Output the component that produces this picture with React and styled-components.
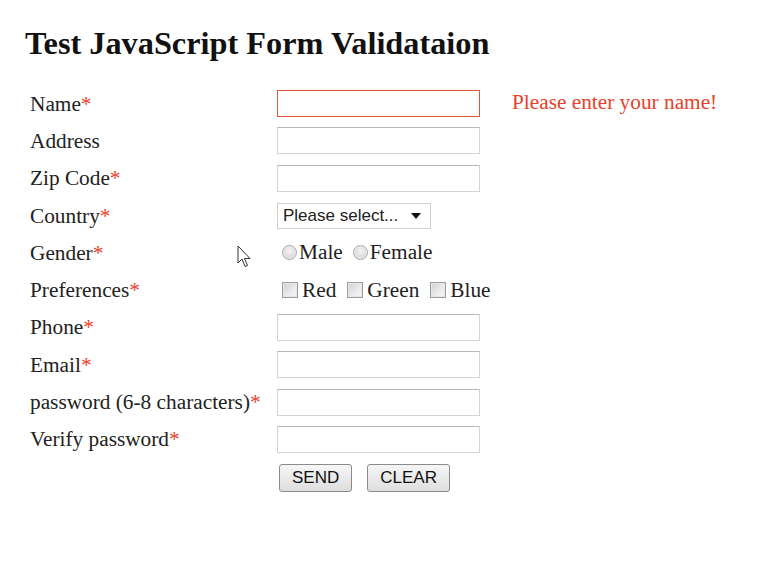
import React from "react";
import styled, { createGlobalStyle } from "styled-components";

const Global = createGlobalStyle`
  html, body { margin: 0; padding: 0; background: #fff; }
  body { font-family: "Liberation Serif", "Times New Roman", serif; color: #222; }
`;

const Page = styled.div`
  position: relative;
  width: 768px;
  height: 570px;
  padding: 26px 0 0 25px;
  box-sizing: border-box;
`;

const Title = styled.h1`
  margin: 0 0 25px 0;
  font-family: "Liberation Serif", "Times New Roman", serif;
  font-weight: bold;
  font-size: 32.3px;
  line-height: 34px;
  color: #111;
`;

const Form = styled.form`
  display: grid;
  grid-template-columns: 247px 235px auto;
  grid-auto-rows: 37.3px;
  align-items: center;
  margin-left: 5px;
`;

const Label = styled.label`
  font-size: 21.3px;
  line-height: 24px;
  color: #222;
  white-space: nowrap;
`;

const Star = styled.span`
  color: #e8412b;
`;

const Cell = styled.div`
  display: flex;
  align-items: center;
  grid-column: ${(p) => (p.$span ? "2 / span 2" : "auto")};
`;

const TextInput = styled.input`
  width: 203px;
  height: 27px;
  box-sizing: border-box;
  border: 1px solid ${(p) => (p.$error ? "#e0543c" : "#d4d4d4")};
  border-top-color: ${(p) => (p.$error ? "#e0543c" : "#b8b8b8")};
  background: #fff;
  margin: 0;
  padding: 2px 4px;
  outline: none;
`;

const Error = styled.span`
  font-size: 21.3px;
  color: #e8412b;
  white-space: nowrap;
  margin-top: -2px;
`;

const SelectBox = styled.div`
  width: 154px;
  height: 26px;
  box-sizing: border-box;
  border: 1px solid #d0d0d0;
  display: flex;
  align-items: center;
  justify-content: space-between;
  padding: 0 9px 0 5px;
  font-family: "Liberation Sans", Arial, sans-serif;
  font-size: 17px;
  color: #222;
  background: #fff;
`;

const Arrow = styled.span`
  width: 0;
  height: 0;
  border-left: 5px solid transparent;
  border-right: 5px solid transparent;
  border-top: 6px solid #111;
`;

const Option = styled.label`
  display: inline-flex;
  align-items: center;
  font-size: 21.3px;
  color: #222;
  margin-right: ${(p) => p.$gap || 0}px;
`;

const Radio = styled.span`
  display: inline-block;
  width: 13px;
  height: 13px;
  border-radius: 50%;
  border: 1px solid #a8a8a8;
  background: radial-gradient(circle at 50% 40%, #f4f4f4 0%, #dcdcdc 60%, #c8c8c8 100%);
  box-shadow: inset 0 0 0 1px #eee;
  margin: 0 2px 0 5px;
`;

const Check = styled.span`
  display: inline-block;
  width: 14px;
  height: 14px;
  border: 1px solid #9c9c9c;
  background: linear-gradient(135deg, #cfcfcf 0%, #ececec 60%, #f6f6f6 100%);
  box-shadow: inset 0 0 0 1px #e8e8e8;
  margin: 0 4px 0 5px;
`;

const Buttons = styled.div`
  display: flex;
  gap: 15px;
  padding-left: 2px;
  margin-top: 2px;
  grid-column: 2 / span 2;
`;

const Button = styled.button`
  height: 28px;
  padding: 0 ${(p) => p.$pad}px;
  font-family: "Liberation Sans", Arial, sans-serif;
  font-size: 17px;
  color: #111;
  border: 1px solid #8a8a8a;
  border-radius: 3px;
  background: linear-gradient(#f6f6f6, #dedede);
  margin: 0;
`;

const Cursor = styled.svg`
  position: absolute;
  left: 237px;
  top: 245px;
`;

const Empty = styled.div``;

const fields = [
  { label: "Name", req: true, error: true },
  { label: "Address" },
  { label: "Zip Code", req: true },
];

const fields2 = [
  { label: "Phone", req: true },
  { label: "Email", req: true },
  { label: "password (6-8 characters)", req: true },
  { label: "Verify password", req: true },
];

const FieldLabel = ({ text, req }) => (
  <Label>
    {text}
    {req && <Star>*</Star>}
  </Label>
);

export default function App() {
  return (
    <Page>
      <Global />
      <Title>Test JavaScript Form Validataion</Title>
      <Form>
        {fields.map((f) => (
          <React.Fragment key={f.label}>
            <FieldLabel text={f.label} req={f.req} />
            <Cell>
              <TextInput $error={f.error} />
            </Cell>
            {f.error ? <Error>Please enter your name!</Error> : <Empty />}
          </React.Fragment>
        ))}
        <FieldLabel text="Country" req />
        <Cell $span>
          <SelectBox>
            Please select...
            <Arrow />
          </SelectBox>
        </Cell>
        <FieldLabel text="Gender" req />
        <Cell $span>
          <Option $gap={5}>
            <Radio />
            Male
          </Option>
          <Option>
            <Radio />
            Female
          </Option>
        </Cell>
        <FieldLabel text="Preferences" req />
        <Cell $span>
          <Option $gap={6}>
            <Check />
            Red
          </Option>
          <Option $gap={6}>
            <Check />
            Green
          </Option>
          <Option>
            <Check />
            Blue
          </Option>
        </Cell>
        {fields2.map((f) => (
          <React.Fragment key={f.label}>
            <FieldLabel text={f.label} req={f.req} />
            <Cell>
              <TextInput />
            </Cell>
            <Empty />
          </React.Fragment>
        ))}
        <Empty />
        <Buttons>
          <Button type="button" $pad={12}>SEND</Button>
          <Button type="button" $pad={12}>CLEAR</Button>
        </Buttons>
      </Form>
      <Cursor width="15" height="24" viewBox="0 0 15 24">
        <path
          d="M1 1 L1 18 L5 14 L8 21.5 L10.5 20.5 L7.5 13.5 L13 13.5 Z"
          fill="#fff"
          stroke="#333"
          strokeWidth="1"
          strokeLinejoin="miter"
        />
      </Cursor>
    </Page>
  );
}
